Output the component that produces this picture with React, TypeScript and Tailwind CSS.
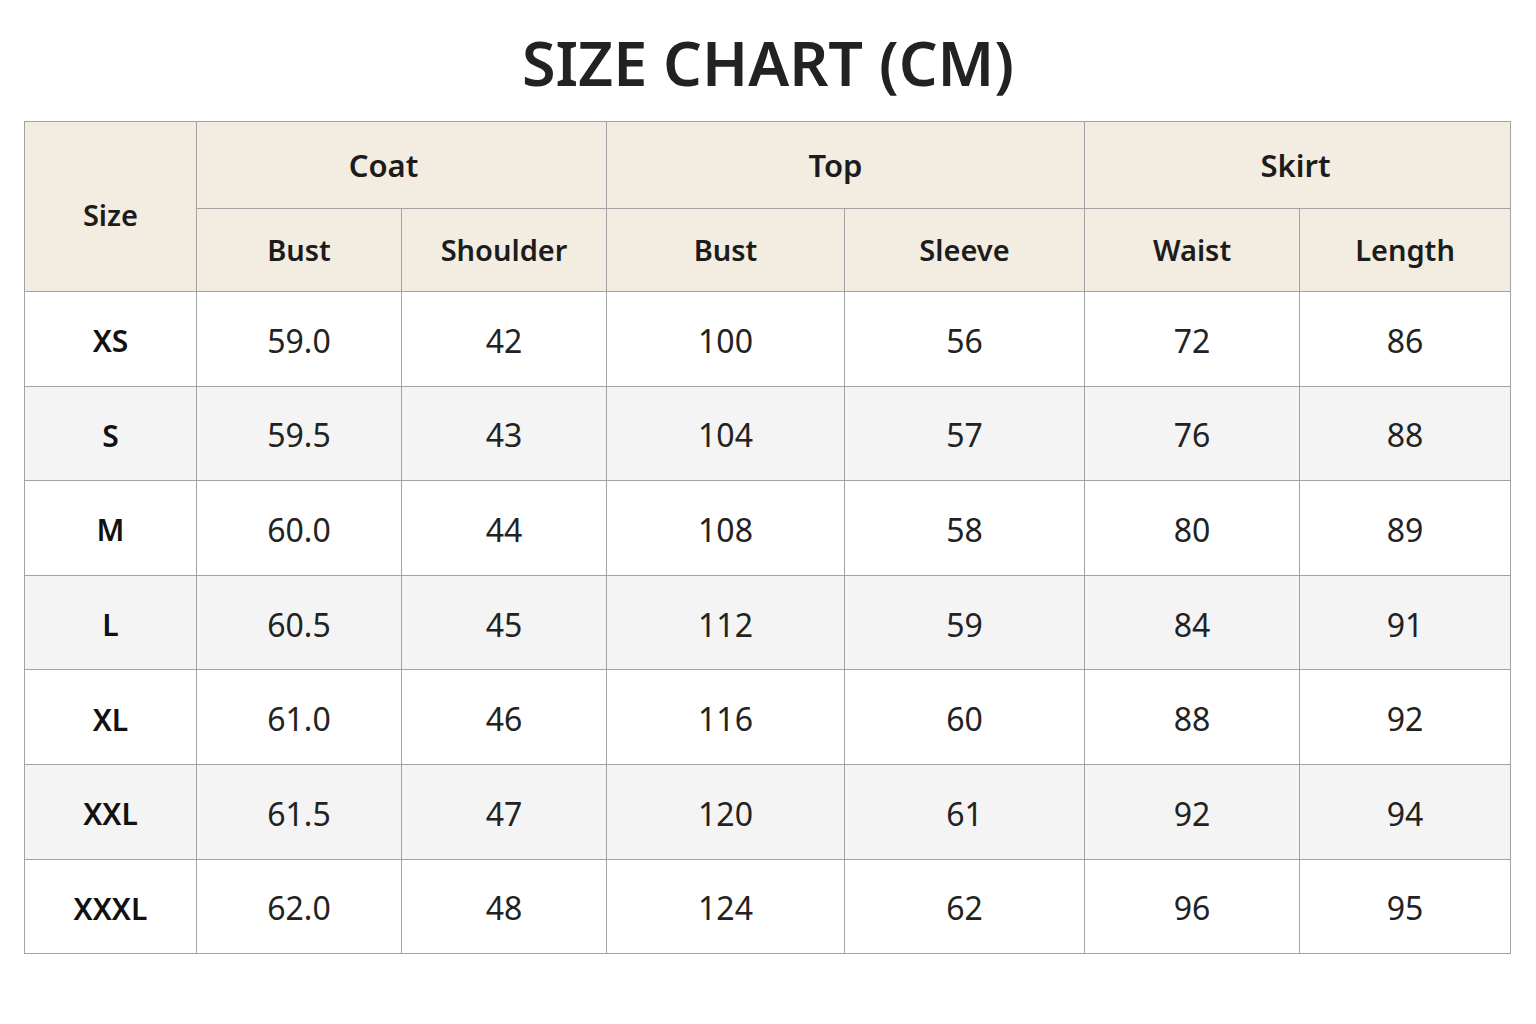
import React from 'react';

const rows: [string, string, string, string, string, string, string][] = [
  ['XS', '59.0', '42', '100', '56', '72', '86'],
  ['S', '59.5', '43', '104', '57', '76', '88'],
  ['M', '60.0', '44', '108', '58', '80', '89'],
  ['L', '60.5', '45', '112', '59', '84', '91'],
  ['XL', '61.0', '46', '116', '60', '88', '92'],
  ['XXL', '61.5', '47', '120', '61', '92', '94'],
  ['XXXL', '62.0', '48', '124', '62', '96', '95'],
];

const widths = ['w-[172px]', 'w-[205px]', 'w-[205px]', 'w-[238px]', 'w-[240px]', 'w-[215px]', 'w-[211px]'];

export default function App() {
  const cell = 'border border-[#a3a3a3] text-center align-middle';
  const head = `${cell} bg-[#f2ece1] font-semibold text-[29px] text-[#1c1c1c]`;

  return (
    <div className="w-[1536px] h-[1024px] bg-white font-['Noto_Sans',sans-serif] text-[#1c1c1c]">
      <div className="h-[121px] flex items-center justify-center pt-1">
        <h1 className="text-[61px] font-semibold leading-none text-[#222]">SIZE CHART (CM)</h1>
      </div>
      <div className="pl-[24px]">
        <table className="border-collapse table-fixed w-[1486px]">
          <colgroup>
            {widths.map((w, i) => (
              <col key={i} className={w} />
            ))}
          </colgroup>
          <thead>
            <tr className="h-[87px]">
              <th rowSpan={2} className={`${head} text-[28px] pt-4`}>Size</th>
              <th colSpan={2} className={`${head} text-[31px] pr-[36px]`}>Coat</th>
              <th colSpan={2} className={`${head} text-[31px] pr-[20px]`}>Top</th>
              <th colSpan={2} className={`${head} text-[31px] pr-[4px]`}>Skirt</th>
            </tr>
            <tr className="h-[83px]">
              {['Bust', 'Shoulder', 'Bust', 'Sleeve', 'Waist', 'Length'].map((h, i) => (
                <th key={i} className={head}>{h}</th>
              ))}
            </tr>
          </thead>
          <tbody>
            {rows.map((r, i) => (
              <tr key={r[0]} className={`h-[94.6px] ${i % 2 === 1 ? 'bg-[#f4f4f4]' : 'bg-white'}`}>
                <td className={`${cell} font-semibold text-[30px] text-[#111] pt-1`}>{r[0]}</td>
                {r.slice(1).map((v, j) => (
                  <td key={j} className={`${cell} text-[32px] text-[#222] pt-1`}>{v}</td>
                ))}
              </tr>
            ))}
          </tbody>
        </table>
      </div>
    </div>
  );
}
